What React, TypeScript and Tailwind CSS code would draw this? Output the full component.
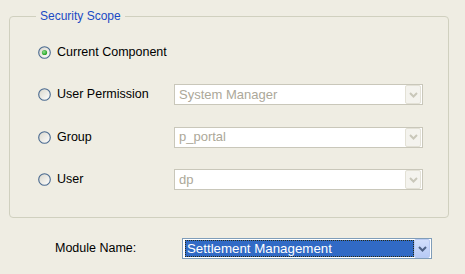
import React from "react";

const font = { fontFamily: '"Liberation Sans", Arial, sans-serif' };

function Radio({ checked }: { checked?: boolean }) {
  return (
    <svg width="13" height="13" viewBox="0 0 13 13" className="shrink-0">
      <defs>
        <linearGradient id="rfill" x1="0" y1="0" x2="1" y2="1">
          <stop offset="0" stopColor="#D8D6CB" />
          <stop offset="1" stopColor="#FFFFFF" />
        </linearGradient>
        <radialGradient id="rdot" cx="0.4" cy="0.4" r="0.6">
          <stop offset="0" stopColor="#8FE08F" />
          <stop offset="1" stopColor="#21A121" />
        </radialGradient>
      </defs>
      <circle cx="6.5" cy="6.5" r="5.8" fill="url(#rfill)" stroke="#4A6A90" strokeWidth="1.1" />
      {checked && <circle cx="6.5" cy="6.5" r="2.6" fill="url(#rdot)" />}
    </svg>
  );
}

function Chevron({ color }: { color: string }) {
  return (
    <svg width="9" height="6" viewBox="0 0 9 6">
      <path d="M1 1 L4.5 4.5 L8 1" fill="none" stroke={color} strokeWidth="2" />
    </svg>
  );
}

function DisabledSelect({ value }: { value: string }) {
  return (
    <div className="flex h-[21px] w-[249px] items-center border border-[#C9C7BA] bg-white">
      <span className="flex-1 pl-[4px] text-[13px] text-[#ACA899]">{value}</span>
      <div className="mr-px flex h-[19px] w-[16px] items-center justify-center rounded-[2px] border border-[#E3E1D6] bg-[#F4F3EE]">
        <Chevron color="#C9C7BA" />
      </div>
    </div>
  );
}

const rows = [
  { label: "Current Component", checked: true },
  { label: "User Permission", value: "System Manager" },
  { label: "Group", value: "p_portal" },
  { label: "User", value: "dp" },
];

export default function App() {
  return (
    <div className="flex h-[274px] w-[465px] flex-col bg-[#EFEDE3] text-black" style={font}>
      <fieldset className="ml-[9px] mt-[9px] h-[209px] w-[440px] rounded-[4px] border border-[#D0D0BF]">
        <legend className="ml-[26px] px-[4px] text-[12px] leading-[14px] text-[#1B4AC4]">Security Scope</legend>
        <div className="flex flex-col gap-[21.5px] pl-[28px] pt-[18.5px]">
          {rows.map((r) => (
            <div key={r.label} className="flex h-[21px] items-center">
              <Radio checked={r.checked} />
              <span className="ml-[6px] w-[117px] text-[12.5px]">{r.label}</span>
              {r.value && <DisabledSelect value={r.value} />}
            </div>
          ))}
        </div>
      </fieldset>
      <div className="mt-[20px] flex h-[21px] items-center">
        <span className="ml-[55px] w-[127px] text-[12.5px]">Module Name:</span>
        <div className="flex h-[21px] w-[250px] items-center border border-[#7F9DB9] bg-white pl-[2px]">
          <div className="flex h-[17px] w-[229px] items-center border border-dotted border-[#2a2a10] bg-[#316AC5]">
            <span className="pl-[1px] text-[13.3px] leading-[15px] text-white">Settlement Management</span>
          </div>
          <div className="ml-auto mr-px flex h-[19px] w-[16px] items-center justify-center rounded-[2px] border border-[#B9CBF3] bg-gradient-to-b from-[#D2DFFC] to-[#B7CAF5]">
            <Chevron color="#4D6185" />
          </div>
        </div>
      </div>
    </div>
  );
}
